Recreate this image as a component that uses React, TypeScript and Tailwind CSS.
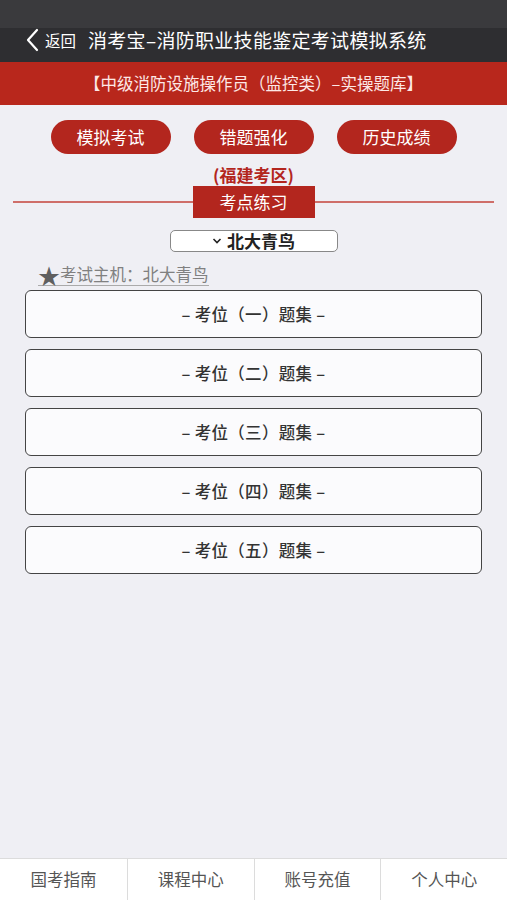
const TOP = ["模拟考试", "错题强化", "历史成绩"];
const SETS = ["一", "二", "三", "四", "五"];
const TABS = ["国考指南", "课程中心", "账号充值", "个人中心"];

export default function App() {
  return (
    <div
      className="w-[507px] h-[900px] flex flex-col bg-[#efeff4] text-[#333]"
      style={{ fontFamily: '"Noto Sans CJK SC", "Noto Sans", sans-serif' }}
    >
      <div className="h-[28px] bg-[#3a3a3d]" />
      <div className="h-[34px] bg-[#2e2e31] flex items-start text-white">
        <svg width="16" height="24" viewBox="0 0 16 24" className="ml-[25px]">
          <path d="M12 2 L3 12 L12 22" fill="none" stroke="#fff" strokeWidth="2.2" strokeLinecap="round" strokeLinejoin="round" />
        </svg>
        <span className="ml-[4px] text-[15.5px] leading-[24px]">返回</span>
        <span className="ml-[12px] text-[19px] leading-[24px] tracking-[0.3px]">消考宝–消防职业技能鉴定考试模拟系统</span>
      </div>
      <div className="h-[43px] bg-[#b8271c] flex items-center justify-center text-[16.5px] text-[#fde8e6]">
        【中级消防设施操作员（监控类）–实操题库】
      </div>

      <div className="flex justify-center gap-[23px] mt-[15px]">
        {TOP.map(t => (
          <div key={t} className="w-[120px] h-[34px] rounded-full bg-[#b3261e] text-white text-[17px] flex items-center justify-center">
            {t}
          </div>
        ))}
      </div>

      <div className="mt-[10px] text-center text-[17px] font-bold text-[#b3261e] leading-[22px]">(福建考区)</div>

      <div className="flex items-center px-[13px]">
        <div className="flex-1 h-[1.5px] bg-[#cf6e69]" />
        <div className="w-[122px] h-[32px] bg-[#b3261e] text-white text-[17px] flex items-center justify-center">考点练习</div>
        <div className="flex-1 h-[1.5px] bg-[#cf6e69]" />
      </div>

      <div className="flex justify-center mt-[12px]">
        <div className="w-[168px] h-[22px] border border-[#888] rounded-[5px] bg-white flex items-center justify-center text-[17px] font-semibold text-[#222]">
          <svg width="10" height="8" viewBox="0 0 10 8" className="mr-[5px]">
            <path d="M1.5 2 L5 5.5 L8.5 2" fill="none" stroke="#222" strokeWidth="1.6" />
          </svg>
          北大青鸟
        </div>
      </div>

      <div className="ml-[38px] mt-[11px] self-start flex items-center text-[16.5px] text-[#808080] border-b border-[#aaa] leading-[22px]">
        <span className="text-[22px] leading-[22px] text-[#5f5f5f]">★</span>
        考试主机：北大青鸟
      </div>

      <div className="flex flex-col gap-[11px] px-[25px] mt-[4px]">
        {SETS.map(n => (
          <div key={n} className="h-[48px] rounded-[6px] border-[1.5px] border-[#444] bg-[#fbfbfd] flex items-center justify-center text-[16.5px] font-medium tracking-[0.3px] text-[#333] whitespace-pre">
            {`– 考位（${n}）题集 –`}
          </div>
        ))}
      </div>

      <div className="flex-1" />

      <div className="h-[42px] bg-white border-t border-[#dcdcdc] grid grid-cols-4">
        {TABS.map((t, i) => (
          <div key={t} className={`flex items-center justify-center text-[16.5px] text-[#555] ${i > 0 ? "border-l border-[#dcdcdc]" : ""}`}>
            {t}
          </div>
        ))}
      </div>
    </div>
  );
}
